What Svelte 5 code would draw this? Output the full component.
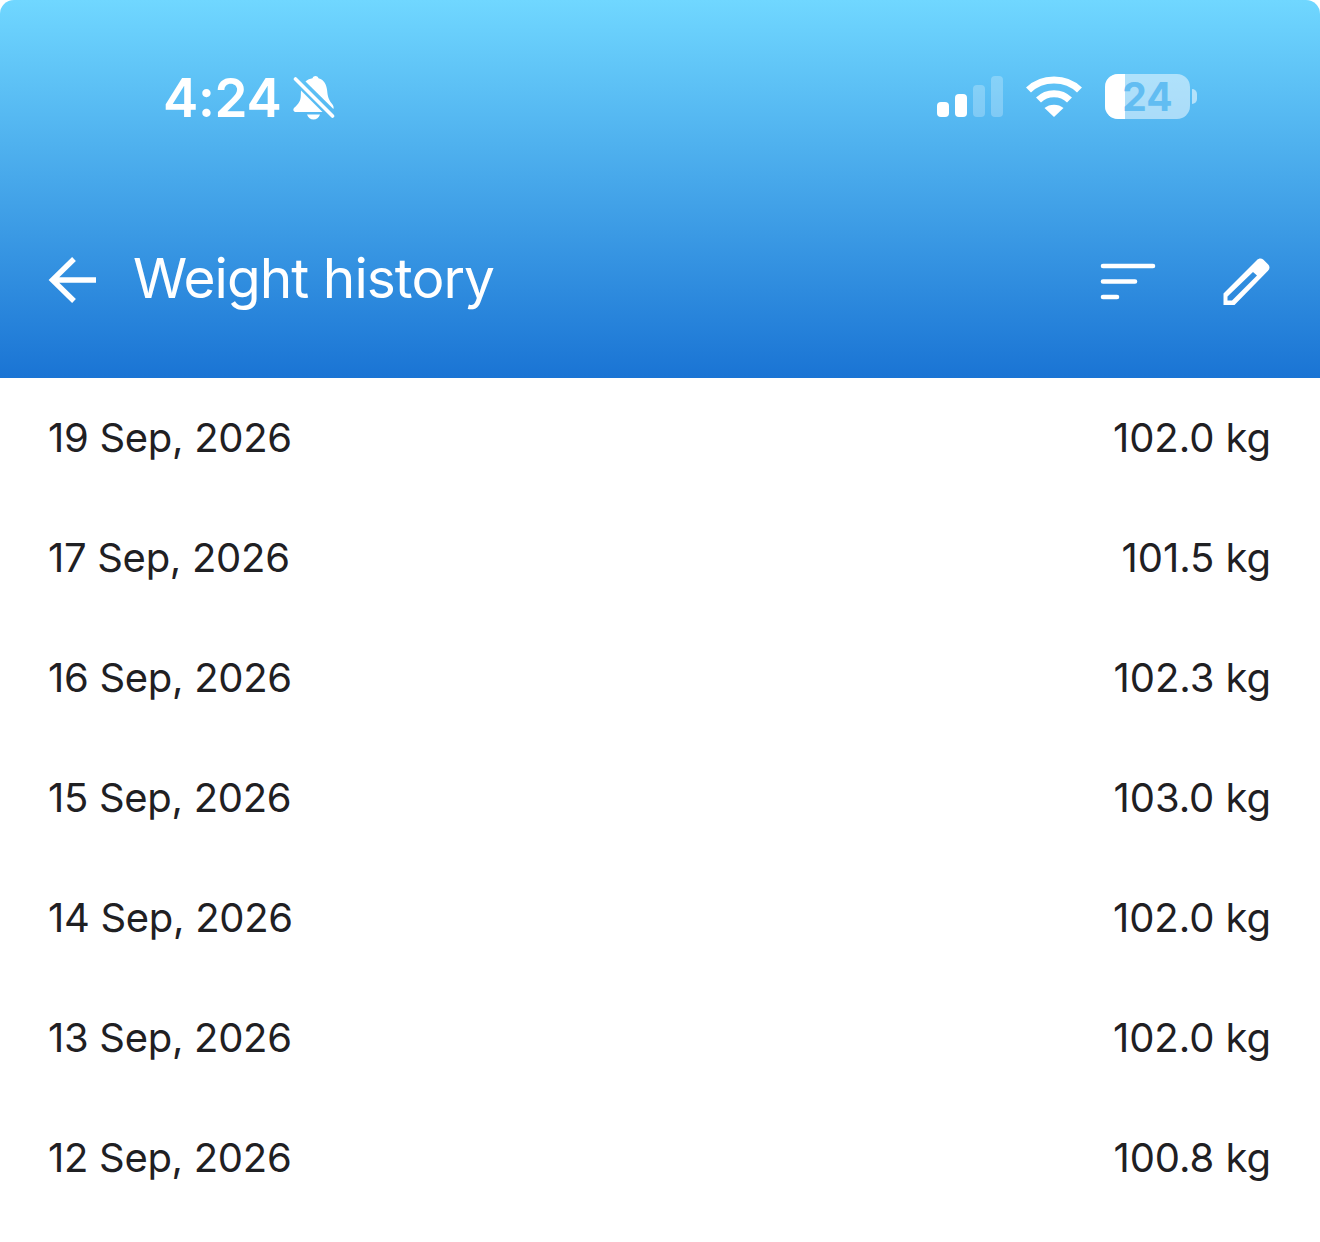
<script lang="ts">
  const rows = [
    { date: '19 Sep, 2026', weight: '102.0 kg' },
    { date: '17 Sep, 2026', weight: '101.5 kg' },
    { date: '16 Sep, 2026', weight: '102.3 kg' },
    { date: '15 Sep, 2026', weight: '103.0 kg' },
    { date: '14 Sep, 2026', weight: '102.0 kg' },
    { date: '13 Sep, 2026', weight: '102.0 kg' },
    { date: '12 Sep, 2026', weight: '100.8 kg' }
  ];
</script>

<div class="page">
  <header class="header">
    <div class="status">
      <div class="statusLeft">
        <span class="time">4:24</span>
        <svg class="bell" width="42" height="44" viewBox="0 0 42 44" aria-hidden="true">
          <path fill="#fff" d="M8 14.5 L29.5 36 H3 C0.5 36 -0.5 33.5 1.2 31.8 C5.5 28 7.6 25 7.8 20 C7.9 18 7.9 16 8 14.5 Z" />
          <path fill="#fff" d="M12.5 5.5 C14.5 3.6 17 2.6 19.5 2.2 C20.5 -0.6 24.5 -0.6 25.5 2.2 C31.5 3.8 33.6 9 34.2 15 C34.6 20 35.6 24 39.5 28.5 C40.6 30 40.8 31 40.4 33 Z" />
          <path fill="#fff" d="M14 38.5 H27 C25.8 42 23.5 43.5 20.5 43.5 C17.5 43.5 15.2 42 14 38.5 Z" />
          <path fill="none" stroke="#fff" stroke-width="3.6" stroke-linecap="round" d="M2.5 3 L39.5 40" />
        </svg>
      </div>
      <div class="statusRight">
        <div class="signal" aria-hidden="true">
          <span class="bar b1"></span>
          <span class="bar b2"></span>
          <span class="bar b3"></span>
          <span class="bar b4"></span>
        </div>
        <svg class="wifi" width="58" height="42" viewBox="0 0 58 42" aria-hidden="true">
          <path fill="none" stroke="#fff" stroke-width="7" d="M3.5 15 C17 1.5 41 1.5 54.5 15" />
          <path fill="none" stroke="#fff" stroke-width="7" d="M13.5 25 C22 16.5 36 16.5 44.5 25" />
          <path fill="#fff" d="M19.5 33 C24.5 28.5 33.5 28.5 38.5 33 L29 42 Z" />
        </svg>
        <div class="battery">
          <div class="cell">
            <span class="charge"></span>
            <span class="level">24</span>
          </div>
          <span class="nub"></span>
        </div>
      </div>
    </div>

    <div class="toolbar">
      <svg class="back" width="50" height="50" viewBox="0 0 50 50" aria-hidden="true">
        <path fill="none" stroke="#fff" stroke-width="5.4" d="M48 26 H5 M26 5 L4.5 26 L26 47" />
      </svg>
      <h1 class="title">Weight history</h1>
      <svg class="sort" width="56" height="38" viewBox="0 0 56 38" aria-hidden="true">
        <path fill="none" stroke="#fff" stroke-width="4.6" stroke-linecap="round" d="M3 3 H53 M3 18.5 H35 M3 34 H17" />
      </svg>
      <svg class="edit" width="48" height="48" viewBox="0 0 48 48" aria-hidden="true">
        <path fill="#fff" fill-rule="evenodd" d="M1.5 47 V35.5 L35 2 C37 0 39.5 0 41.5 1.8 L46 6.2 C48 8.2 48 10.8 46 12.8 L12.5 47 Z M5.5 42.5 H10 L35 17.5 L31 14 L5.5 38.5 Z" />
      </svg>
    </div>
  </header>

  <main class="list">
    {#each rows as row (row.date)}
      <div class="row">
        <span>{row.date}</span>
        <span class="weight">{row.weight}</span>
      </div>
    {/each}
  </main>
</div>

<style>
  :global(body) {
    margin: 0;
    background: #fff;
  }

  .page {
    width: 1320px;
    height: 1242px;
    overflow: hidden;
    background: #fff;
    font-family: Inter, "Liberation Sans", sans-serif;
  }

  .header {
    height: 378px;
    box-sizing: border-box;
    padding: 0 50px 0 48px;
    background: linear-gradient(180deg, #70d7ff 0%, #1a74d4 100%);
    border-radius: 14px 14px 0 0;
    display: flex;
    flex-direction: column;
    color: #fff;
  }

  .status {
    margin-top: 67px;
    height: 58px;
    padding: 0 73px 0 115px;
    display: flex;
    align-items: center;
    justify-content: space-between;
  }

  .statusLeft {
    display: flex;
    align-items: center;
    gap: 11px;
  }

  .time {
    margin-top: 4px;
    font-size: 53px;
    font-weight: 600;
    line-height: 58px;
    letter-spacing: -0.3px;
  }

  .bell {
    margin-top: 4px;
  }

  .statusRight {
    display: flex;
    align-items: center;
    gap: 22px;
  }

  .signal {
    display: flex;
    align-items: flex-end;
    gap: 6px;
    height: 42px;
  }

  .bar {
    width: 12px;
    border-radius: 4px;
    background: #fff;
  }
  .b1 { height: 15px; }
  .b2 { height: 23px; }
  .b3 { height: 32px; opacity: 0.25; }
  .b4 { height: 41px; opacity: 0.25; }

  .battery {
    display: flex;
    align-items: center;
    gap: 2px;
  }

  .cell {
    position: relative;
    width: 85px;
    height: 45px;
    border-radius: 13px;
    overflow: hidden;
    background: rgba(255, 255, 255, 0.5);
    display: flex;
    align-items: center;
    justify-content: center;
  }

  .charge {
    position: absolute;
    left: 0;
    top: 0;
    bottom: 0;
    width: 20px;
    background: #fff;
  }

  .level {
    position: relative;
    font-size: 39px;
    font-weight: 700;
    line-height: 45px;
    color: #62bdf2;
  }

  .nub {
    width: 5px;
    height: 15px;
    border-radius: 0 5px 5px 0;
    background: rgba(255, 255, 255, 0.55);
  }

  .toolbar {
    margin-top: 125px;
    display: flex;
    align-items: center;
    height: 58px;
  }

  .title {
    flex: 1;
    margin: 0 0 2px 35px;
    font-size: 55px;
    font-weight: 400;
    line-height: 58px;
    letter-spacing: -0.95px;
  }

  .sort {
    margin-top: 6px;
  }

  .edit {
    margin-top: 6px;
    margin-left: 66px;
  }

  .list {
    display: flex;
    flex-direction: column;
  }

  .row {
    box-sizing: border-box;
    height: 120px;
    padding: 0 49px 2px 48px;
    display: flex;
    align-items: center;
    justify-content: space-between;
    font-size: 40px;
    letter-spacing: -0.3px;
    color: #1f2023;
  }

  .weight {
    letter-spacing: -0.05px;
  }
</style>
